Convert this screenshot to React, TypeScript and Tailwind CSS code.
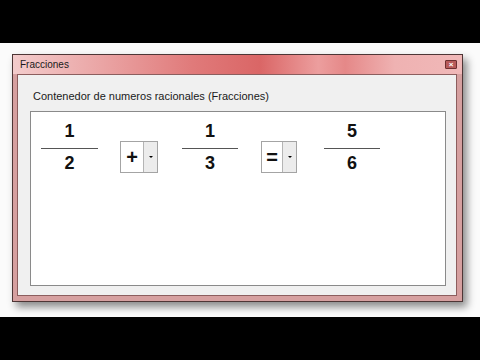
function Fraction({ num, den, width, className }: { num: string; den: string; width: string; className?: string }) {
  return (
    <div className={`flex flex-col items-center ${width} ${className ?? ''}`}>
      <span className="text-[18px] leading-[22px] font-bold text-[#111]">{num}</span>
      <div className="mt-[6px] h-px w-full bg-[#555]" />
      <span className="mt-[3px] text-[18px] leading-[22px] font-bold text-[#111]">{den}</span>
    </div>
  )
}

function Combo({ symbol, textWidth, className }: { symbol: string; textWidth: string; className?: string }) {
  return (
    <div className={`mt-[21px] flex h-[32px] border border-[#a4a4a4] bg-white ${className ?? ''}`}>
      <div className={`flex items-center justify-center ${textWidth}`}>
        <span className="text-[20px] leading-none font-bold text-[#111]">{symbol}</span>
      </div>
      <div className="flex w-[14px] items-center justify-center border-l border-[#b4b4b4] bg-[#ececec]">
        <div className="h-0 w-0 border-x-[2px] border-t-[2px] border-x-transparent border-t-black" />
      </div>
    </div>
  )
}

function Window() {
  return (
    <div className="flex h-[248px] w-[451px] flex-col border border-[#4e3636] bg-[#d6a0a0] shadow-[4px_5px_8px_rgba(0,0,0,0.45)]">
      {/* Title bar */}
      <div className="flex h-[19px] items-center justify-between bg-[linear-gradient(90deg,#f3cccc_0%,#eaa4a4_20%,#e07a7a_40%,#da6666_55%,#ec9e9e_68%,#e58888_74%,#efb2b2_85%,#f0b8b8_100%)] pl-[7px] pr-[5px]">
        <span className="text-[10px] text-[#1a1a1a]">Fracciones</span>
        <div className="flex h-[9px] w-[12px] items-center justify-center rounded-[1px] border border-[#6e3030] bg-[#b85a5a] text-[8px] leading-none font-bold text-white">
          ×
        </div>
      </div>
      {/* Client area */}
      <div className="mb-[5px] ml-[4px] mr-[5px] flex flex-1 flex-col border border-[#8c5e5e] bg-[#f0f0f0] pl-[12px] pt-[15px]">
        <span className="ml-[3px] text-[11px] leading-[13px] text-[#1a1a1a]">
          Contenedor de numeros racionales (Fracciones)
        </span>
        <div className="mt-[8px] flex h-[175px] w-[416px] items-start border border-[#8a8a8a] bg-white pl-[10px] pt-[8px]">
          <Fraction num="1" den="2" width="w-[57px]" />
          <Combo symbol="+" textWidth="w-[22px]" className="ml-[22px]" />
          <Fraction num="1" den="3" width="w-[56px]" className="ml-[24px]" />
          <Combo symbol="=" textWidth="w-[20px]" className="ml-[23px]" />
          <Fraction num="5" den="6" width="w-[56px]" className="ml-[27px]" />
        </div>
      </div>
    </div>
  )
}

export default function App() {
  return (
    <div className="flex h-[360px] w-[480px] flex-col bg-black font-['Liberation_Sans',Arial,sans-serif]">
      <div className="h-[43px]" />
      <div className="h-[274px] bg-[#fbfbfb] pl-[12px] pt-[11px]">
        <Window />
      </div>
    </div>
  )
}
